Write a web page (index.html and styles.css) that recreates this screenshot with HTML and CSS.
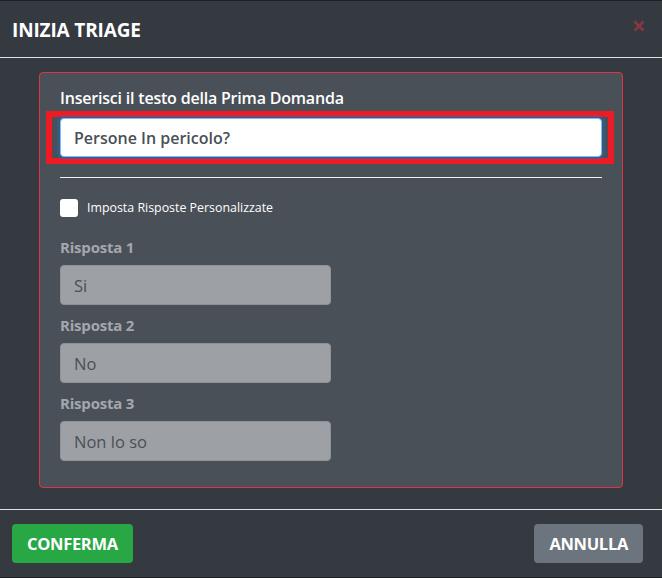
FILE: index.html
```html
<!DOCTYPE html>
<html lang="it">
<head>
<meta charset="utf-8">
<title>Inizia Triage</title>
<link rel="stylesheet" href="styles.css">
</head>
<body>
<div class="modal">
  <div class="modal-header">
    <h5 class="modal-title">INIZIA TRIAGE</h5>
    <button class="close" type="button" aria-label="Chiudi">
      <svg width="12" height="12" viewBox="0 0 12 12"><path d="M1.5 1.5 L10.5 10.5 M10.5 1.5 L1.5 10.5" stroke="currentColor" stroke-width="2.6" stroke-linecap="butt"/></svg>
    </button>
  </div>
  <div class="modal-body">
    <div class="card">
      <label class="label-main">Inserisci il testo della Prima Domanda</label>
      <div class="highlight">
        <input class="input-main" type="text" value="Persone In pericolo?">
      </div>
      <hr class="divider">
      <div class="check-row">
        <span class="checkbox"></span>
        <span class="check-label">Imposta Risposte Personalizzate</span>
      </div>
      <div class="answers">
        <div class="answer">
          <label class="label-answer">Risposta 1</label>
          <input class="input-answer" type="text" value="Si" disabled>
        </div>
        <div class="answer">
          <label class="label-answer">Risposta 2</label>
          <input class="input-answer" type="text" value="No" disabled>
        </div>
        <div class="answer">
          <label class="label-answer">Risposta 3</label>
          <input class="input-answer" type="text" value="Non lo so" disabled>
        </div>
      </div>
    </div>
  </div>
  <div class="modal-footer">
    <button class="btn btn-success" type="button">CONFERMA</button>
    <button class="btn btn-secondary" type="button">ANNULLA</button>
  </div>
</div>
</body>
</html>
```
FILE: styles.css
```css
* { box-sizing: border-box; }
html, body { margin: 0; padding: 0; }
body {
  background: #343a40;
  font-family: "Open Sans", "Noto Sans", sans-serif;
  color: #fff;
}
.modal {
  width: 662px;
  height: 578px;
  background: #343a40;
  border-top: 1px solid #1d2024;
  border-bottom: 1px solid #1d2024;
  display: flex;
  flex-direction: column;
}
.modal-header {
  display: flex;
  align-items: flex-start;
  padding: 14px 17px 12px 12px;
  border-bottom: 1px solid #dee2e6;
}
.modal-title {
  margin: 0;
  font-size: 19px;
  font-weight: 700;
  line-height: 30px;
  letter-spacing: -0.15px;
}
.close {
  margin-left: auto;
  margin-top: 5px;
  padding: 0;
  border: 0;
  background: none;
  color: #dc3545;
  opacity: 0.5;
  width: 12px;
  height: 12px;
  display: block;
}
.close svg { display: block; }
.modal-body {
  padding: 14px 39px 20px 39px;
}
.card {
  background: #495057;
  border: 1px solid #dc3545;
  border-radius: 4px;
  padding: 14px 20px 26px 20px;
  display: flex;
  flex-direction: column;
  align-items: flex-start;
}
.label-main {
  font-size: 16px;
  font-weight: 600;
  line-height: 22px;
  margin-bottom: 2px;
  letter-spacing: -0.2px;
}
.highlight {
  align-self: stretch;
  margin: 0 -12px 0 -14px;
  border: 6px solid #ed1c24;
  padding: 1px 6px 1px 8px;
}
.input-main {
  display: block;
  width: 100%;
  height: 39px;
  border: 1px solid #80bdff;
  border-radius: 4px;
  background: #fff;
  box-shadow: 0 0 0 3px rgba(0, 123, 255, 0.25);
  padding: 0 13px;
  font-family: inherit;
  font-size: 16px;
  font-weight: 600;
  color: #495057;
  outline: none;
}
.divider {
  align-self: stretch;
  margin: 13px 0 0 0;
  border: 0;
  border-top: 1px solid #f2f2f2;
  height: 0;
}
.check-row {
  display: flex;
  align-items: center;
  margin-top: 21px;
  gap: 9px;
}
.checkbox {
  width: 18px;
  height: 18px;
  background: #fff;
  border-radius: 3px;
  display: block;
}
.check-label {
  font-size: 12.4px;
  line-height: 18px;
}
.answers {
  display: flex;
  flex-direction: column;
  margin-top: 19px;
  gap: 9px;
}
.answer {
  display: flex;
  flex-direction: column;
}
.label-answer {
  font-size: 15px;
  font-weight: 700;
  line-height: 22px;
  color: #a3a8ad;
  margin-bottom: 7px;
  letter-spacing: -0.2px;
}
.input-answer {
  display: block;
  width: 271px;
  height: 40px;
  background: #9da1a6;
  border: 1px solid #8f9398;
  border-radius: 4px;
  padding: 0 13px;
  font-family: inherit;
  font-size: 16.5px;
  color: #495057;
}
.modal-footer {
  margin-top: auto;
  display: flex;
  justify-content: space-between;
  padding: 14px 19px 14px 12px;
  border-top: 1px solid #dee2e6;
}
.btn {
  height: 39px;
  padding: 0 15px;
  border: 0;
  border-radius: 4px;
  color: #fff;
  font-family: inherit;
  font-size: 16.5px;
  font-weight: 700;
  letter-spacing: -0.3px;
}
.btn-success { background: #28a745; }
.btn-secondary { background: #6c757d; }
```
